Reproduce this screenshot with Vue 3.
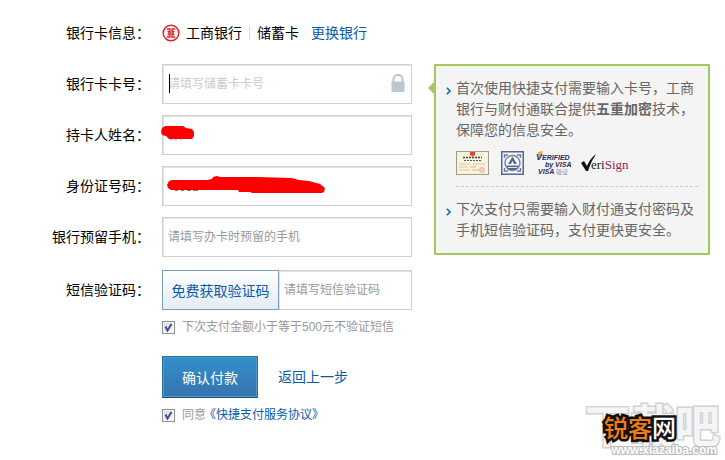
<script setup>
import { ref } from "vue";

const cardNo = ref("");
const owner = ref("");
const idNo = ref("");
const phone = ref("");
const smsCode = ref("");
const skipSms = ref(true);
const agree = ref(true);
</script>

<template>
  <main class="page">
    <form class="form" @submit.prevent>
      <div class="row">
        <span class="row__label">银行卡信息：</span>
        <div class="bank">
          <svg class="bank__logo" viewBox="0 0 18 18" aria-hidden="true">
            <circle cx="9" cy="9" r="7.8" fill="#fff" stroke="#e02020" stroke-width="1.5" />
            <path
              d="M4.800 5h3.200v2.300H5.500M13.200 5H10v2.300h2.500M4.800 13H8v-2.300H5.500M13.200 13H10v-2.300h2.500M6 9h6"
              fill="none"
              stroke="#e02020"
              stroke-width="1.3"
            />
          </svg>
          <span>工商银行</span>
          <span class="bank__divider"></span>
          <span>储蓄卡</span>
          <a class="bank__change" href="#">更换银行</a>
        </div>
      </div>

      <div class="row">
        <label class="row__label" for="card-no">银行卡卡号：</label>
        <div class="field">
          <input id="card-no" v-model="cardNo" class="input input--active" type="text" placeholder="请填写储蓄卡卡号" />
          <span class="field__caret"></span>
          <svg class="field__lock" viewBox="0 0 14 18" aria-hidden="true">
            <path d="M2.5 8V5.5a4.5 4.5 0 0 1 9 0V8" fill="none" stroke="#bac7d0" stroke-width="2.2" />
            <path d="M0.5 7.5h13V18H0.5z" fill="#bac7d0" />
          </svg>
        </div>
      </div>

      <div class="row">
        <label class="row__label" for="owner">持卡人姓名：</label>
        <div class="field">
          <input id="owner" v-model="owner" class="input" type="text" />
          <svg class="field__mask" viewBox="0 0 250 40" aria-hidden="true">
            <path d="M8 24l2 1M14 23v3M19 23v2" fill="none" stroke="#999" />
            <path
              d="M-1 16l1-3 3-2h18l3 2 6 1 2 3v4l-2 3H7l-3-3-4-1z"
              fill="#f00"
            />
          </svg>
        </div>
      </div>

      <div class="row">
        <label class="row__label" for="id-no">身份证号码：</label>
        <div class="field">
          <input id="id-no" v-model="idNo" class="input" type="text" />
          <svg class="field__mask" viewBox="0 0 250 40" aria-hidden="true">
            <path d="M13 24h3M19 24h3M25 24h4M31 24h5" stroke="#777" stroke-width="2" />
            <path
              d="M5 19l2-4 3-1h35l5-1 1-2 4-1 3 1h37l35 1 7 2 10 1 11 3 5 4-1 4-2 1H90l-2-1H77l-1-2H9l-3-2z"
              fill="#f00"
            />
          </svg>
        </div>
      </div>

      <div class="row">
        <label class="row__label" for="phone">银行预留手机：</label>
        <div class="field">
          <input id="phone" v-model="phone" class="input" type="text" placeholder="请填写办卡时预留的手机" />
        </div>
      </div>

      <div class="row row--sms">
        <label class="row__label" for="sms-code">短信验证码：</label>
        <div class="field field--group">
          <button class="sms-btn" type="button">免费获取验证码</button>
          <input id="sms-code" v-model="smsCode" class="input input--sms" type="text" placeholder="请填写短信验证码" />
        </div>
      </div>

      <div class="check">
        <span class="check__box">
          <input id="skip-sms" v-model="skipSms" type="checkbox" />
          <svg v-if="skipSms" viewBox="0 0 13 13" aria-hidden="true">
            <path d="M3.5 5.5l2 4L9.5 3" fill="none" stroke="#3d4f8c" stroke-width="2" />
          </svg>
        </span>
        <label for="skip-sms">下次支付金额小于等于500元不验证短信</label>
      </div>

      <div class="actions">
        <button class="submit" type="submit">确认付款</button>
        <a href="#">返回上一步</a>
      </div>

      <div class="check">
        <span class="check__box">
          <input id="agree" v-model="agree" type="checkbox" />
          <svg v-if="agree" viewBox="0 0 13 13" aria-hidden="true">
            <path d="M3.5 5.5l2 4L9.5 3" fill="none" stroke="#3d4f8c" stroke-width="2" />
          </svg>
        </span>
        <label for="agree">同意</label>
        <a class="check__link" href="#">《快捷支付服务协议》</a>
      </div>
    </form>

    <aside class="tips">
      <div class="tips__item">
        <svg class="tips__arrow" viewBox="0 0 5 8" aria-hidden="true">
          <path d="M0.8 0.8L4 4 0.8 7.2" fill="none" stroke="#0078b8" stroke-width="1.6" />
        </svg>
        <p>首次使用快捷支付需要输入卡号，工商银行与财付通联合提供<strong>五重加密</strong>技术，保障您的信息安全。</p>
      </div>

      <div class="badges">
        <svg width="33" height="24" viewBox="0 0 33 24" aria-hidden="true">
          <rect x="0.5" y="0.5" width="32" height="23" fill="#f8f3dc" stroke="#a09c8c" />
          <path d="M14 1h5v3l-2.5 1.5L14 4z" fill="#e8412f" />
          <path d="M7 6.5h19" stroke="#444" stroke-width="1.4" stroke-dasharray="2 1" />
          <path d="M8 9.5h17" stroke="#555" stroke-width="1" stroke-dasharray="2 1" />
          <path d="M3 13h12M17 13h12M3 16h9M3 19h11" stroke="#d5cfa6" stroke-width="1" />
          <path d="M14 16h6M16 19h7" stroke="#e7ae93" />
          <circle cx="26" cy="19" r="2.5" fill="#f4cdb9" stroke="#ecc0a8" />
        </svg>
        <svg width="23" height="24" viewBox="0 0 23 24" aria-hidden="true">
          <rect x="0.75" y="0.75" width="21.5" height="22.5" fill="#f4f5f8" stroke="#54688f" stroke-width="1.5" />
          <path d="M3.500 7V4h3.500M16 4h3.500v3M19.500 17v3H16M7 20H3.500v-3" fill="none" stroke="#667aa0" stroke-width="1.4" />
          <circle cx="11.5" cy="12" r="7.5" fill="#fff" stroke="#7585a6" stroke-width="1.4" />
          <path d="M11.5 5.500l4.500 7.500h-3l-1.500-3-1.500 3H7z" fill="#54688f" />
          <path d="M5 14.500h13l-3 4.500H8z" fill="#54688f" />
          <path d="M7 16.500h9" stroke="#dde2ea" />
        </svg>
        <svg width="33" height="24" viewBox="0 0 33 24" role="img" aria-label="Verified by VISA">
          <path d="M2 1l5-1-2 5-2 1z" fill="#f4a63a" />
          <g fill="#1c2b5a" font-family="Liberation Sans, sans-serif" font-style="italic" font-weight="700">
            <text x="0" y="9" font-size="9">V<tspan font-size="7">ERIFIED</tspan></text>
            <text x="9" y="16" font-size="7">by VISA</text>
            <text x="2" y="23" font-size="7">VISA</text>
          </g>
          <text x="20" y="23" fill="#8492ad" font-family="Noto Sans CJK SC, sans-serif" font-size="6">验证</text>
        </svg>
        <svg width="48" height="24" viewBox="0 0 48 24" role="img" aria-label="VeriSign">
          <path d="M0 12l3-2 3 5C8 10 11 6 15 3l-1 2c-3 4-5 9-7 15H5z" fill="#111" />
          <text x="10" y="18" font-family="Liberation Serif, serif" font-size="13" fill="#222">
            eri<tspan fill="#94254f">Sign</tspan>
          </text>
        </svg>
      </div>

      <div class="tips__item">
        <svg class="tips__arrow" viewBox="0 0 5 8" aria-hidden="true">
          <path d="M0.8 0.8L4 4 0.8 7.2" fill="none" stroke="#0078b8" stroke-width="1.6" />
        </svg>
        <p>下次支付只需要输入财付通支付密码及手机短信验证码，支付更快更安全。</p>
      </div>
    </aside>

    <div class="watermark">
      <span class="watermark__name">下载吧</span>
      <span class="watermark__url">www.xiazaiba.com</span>
      <span class="watermark__brand"><b>锐客</b>网</span>
    </div>
  </main>
</template>

<style>
body {
  margin: 0;
  background: #fff;
}
</style>

<style scoped>
.page {
  position: relative;
  box-sizing: border-box;
  display: flex;
  align-items: flex-start;
  gap: 22px;
  min-height: 460px;
  padding: 13px 15px 0 0;
  font-family: "Liberation Sans", "Noto Sans CJK SC", sans-serif;
  font-size: 14px;
  line-height: 21px;
  color: #000;
  overflow: hidden;
}

a {
  color: #0a59a8;
  text-decoration: none;
}

.form {
  flex: 0 0 412px;
}

.row {
  display: flex;
  align-items: center;
  height: 40px;
  margin-bottom: 11px;
}

.row--sms {
  margin: 13px 0 8px;
}

.row__label {
  width: 150px;
  margin-right: 12px;
  text-align: right;
}

.bank {
  display: flex;
  align-items: center;
}

.bank__logo {
  width: 18px;
  height: 18px;
  margin-right: 6px;
}

.bank__divider {
  width: 1px;
  height: 14px;
  margin: 0 7px;
  background: #d8dccb;
}

.bank__change {
  margin-left: 12px;
}

.field {
  position: relative;
  flex: 1;
  min-width: 0;
}

.field--group {
  display: flex;
}

.input {
  box-sizing: border-box;
  display: block;
  width: 100%;
  height: 40px;
  padding: 0 5px;
  border: 1px solid #d0d0d0;
  border-radius: 0;
  outline: none;
  background: #fff;
  box-shadow: inset 1px 1px 0 #e4e4e4;
  font-family: inherit;
  font-size: 12px;
  color: #333;
}

.input::placeholder {
  color: #999;
  opacity: 1;
}

.input--active::placeholder {
  color: #ccc;
}

.input--sms {
  flex: 1;
  min-width: 0;
  border-left: 0;
}

.field__caret {
  position: absolute;
  top: 10px;
  left: 7px;
  width: 1px;
  height: 19px;
  background: #000;
}

.field__lock {
  position: absolute;
  top: 10px;
  right: 7px;
  width: 14px;
  height: 18px;
}

.field__mask {
  position: absolute;
  inset: 0;
  width: 100%;
  height: 40px;
  overflow: visible;
  pointer-events: none;
}

.sms-btn {
  box-sizing: border-box;
  flex: 0 0 117px;
  height: 40px;
  padding: 0;
  border: 1px solid #7b9ebd;
  background: linear-gradient(#fff, #e3ebf4);
  font-family: inherit;
  font-size: 14px;
  color: #0a59a8;
}

.check {
  display: flex;
  align-items: center;
  height: 18px;
  margin-left: 162px;
  font-size: 12px;
  line-height: 18px;
  color: #999;
}

.check__box {
  display: grid;
  width: 13px;
  height: 13px;
  margin-right: 7px;
}

.check__box input,
.check__box svg {
  grid-area: 1 / 1;
  width: 13px;
  height: 13px;
  margin: 0;
}

.check__box input {
  appearance: none;
  box-sizing: border-box;
  border: 1px solid #8e8f8f;
  background: linear-gradient(135deg, #d4d8de, #fff);
  box-shadow: inset 0 0 0 1px #f4f4f4;
}

.check__box svg {
  pointer-events: none;
}

.check__link {
  margin-left: -2px;
}

.actions {
  display: flex;
  align-items: center;
  gap: 20px;
  margin: 20px 0 8px 162px;
}

.submit {
  box-sizing: border-box;
  width: 96px;
  height: 42px;
  padding: 0;
  border: 1px solid #2a6fa5;
  border-bottom-color: #174f80;
  background: linear-gradient(#338fcb, #3673ad);
  box-shadow: inset 0 0 0 1px #5295c7;
  font-family: inherit;
  font-size: 14px;
  color: #fff;
}

.tips {
  position: relative;
  flex: 1;
  min-width: 0;
  margin-top: 51px;
  padding: 12px 10px 12px;
  border: 2px solid #a5c85c;
  background: #f4f4f4;
  color: #666;
}

/* left pointer towards the card number field */
.tips::before {
  content: "";
  position: absolute;
  top: 16px;
  left: -8px;
  border: 6px solid transparent;
  border-right-color: #a5c85c;
  border-left: 0;
}

.tips__item {
  display: flex;
  gap: 5px;
}

.tips__item p {
  margin: 0;
}

.tips__arrow {
  flex: none;
  width: 5px;
  height: 8px;
  margin-top: 9px;
}

.badges {
  display: flex;
  gap: 12px;
  margin: 10px 0 12px 10px;
  padding-bottom: 11px;
  border-bottom: 1px dashed #ccc;
}

.badges svg {
  overflow: visible;
}

.watermark {
  position: absolute;
  right: 6px;
  bottom: 2px;
  width: 134px;
  height: 62px;
  font-family: "Noto Sans CJK SC", sans-serif;
  font-weight: 700;
  white-space: nowrap;
}

.watermark span {
  position: absolute;
}

.watermark__name {
  top: 0;
  left: 0;
  font-size: 45px;
  line-height: 56px;
  color: #f5f5f5;
  -webkit-text-stroke: 3px #d2d2d2;
  paint-order: stroke fill;
}

.watermark__url {
  right: 2px;
  bottom: 1px;
  font-family: "Liberation Sans", sans-serif;
  font-size: 12px;
  line-height: 14px;
  color: #fff;
  -webkit-text-stroke: 2px #bbb;
  paint-order: stroke fill;
}

.watermark__brand {
  top: 15px;
  left: 19px;
  font-size: 24px;
  font-weight: 500;
  line-height: 32px;
  color: #fff;
  -webkit-text-stroke: 5px #111;
  paint-order: stroke fill;
}

.watermark__brand b {
  font-weight: 500;
  color: #f27a12;
}
</style>
